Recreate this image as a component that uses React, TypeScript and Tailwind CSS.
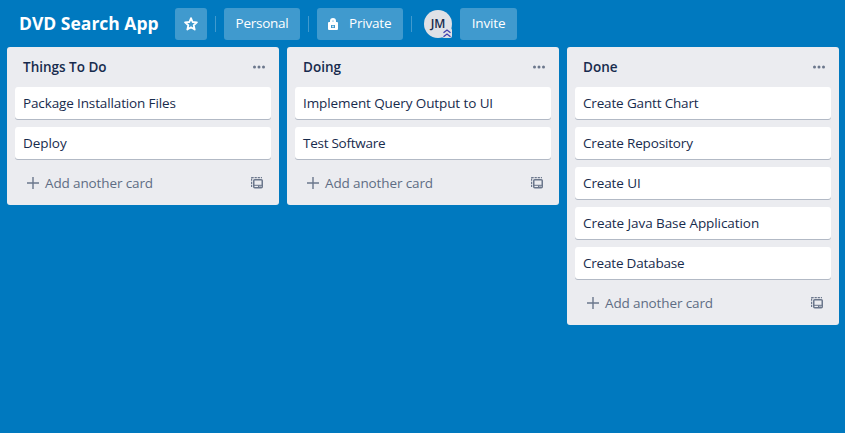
import React from "react";

const lists = [
  { title: "Things To Do", cards: [["Package Installation Files", "tracking-[-0.13px]"], ["Deploy", "tracking-[-0.05px]"]] },
  { title: "Doing", cards: [["Implement Query Output to UI", "tracking-[-0.1px]"], ["Test Software", "tracking-[-0.26px]"]] },
  {
    title: "Done",
    cards: [
      ["Create Gantt Chart", "tracking-[-0.16px]"],
      ["Create Repository", "tracking-[-0.15px]"],
      ["Create UI", "tracking-[-0.12px]"],
      ["Create Java Base Application", "tracking-[-0.07px]"],
      ["Create Database", "tracking-[-0.2px]"],
    ],
  },
];

function Star() {
  return (
    <svg width="14" height="14" viewBox="0 0 14 14" fill="none" stroke="#fff" strokeWidth="1.8" strokeLinejoin="round">
      <path d="M7 1.2 8.6 5 12.9 5.4 9.7 8.2 10.7 12.6 7 10.3 3.3 12.6 4.3 8.2 1.1 5.4 5.4 5Z" />
    </svg>
  );
}

function Lock() {
  return (
    <svg width="10" height="12" viewBox="0 0 10 12" fill="none">
      <path d="M2 5V3q0-3 3-3t3 3v2Z" fill="#fff" />
      <path d="M4 4V2.8q0-.8 1-.8t1 .8V4Z" fill="#c4e0f1" />
      <path fillRule="evenodd" clipRule="evenodd" fill="#fff" d="M1 4h8a1 1 0 0 1 1 1v6a1 1 0 0 1-1 1H1a1 1 0 0 1-1-1V5a1 1 0 0 1 1-1Zm2 3v3h4V7Z" />
      <path fill="#fff" d="M4.3 7.8h1.4v1.4H4.3z" />
    </svg>
  );
}

function Divider() {
  return <span className="h-4 w-px shrink-0 bg-[#409ace]" />;
}

function Dots() {
  return (
    <svg width="14" height="4" viewBox="0 0 14 4" fill="#6b778c">
      <circle cx="2.5" cy="2" r="1.5" />
      <circle cx="7" cy="2" r="1.5" />
      <circle cx="11.5" cy="2" r="1.5" />
    </svg>
  );
}

function Template() {
  return (
    <svg width="12" height="12" viewBox="0 0 12 12" fill="none" stroke="#6b778c">
      <path d="M0.6 10V0.6H11" strokeWidth="1.2" strokeDasharray="2.2 0.9" />
      <rect x="2.75" y="2.75" width="8.5" height="8" rx="1" strokeWidth="1.5" />
      <path d="M3 8.3h8M7.5 8.5v2M9 8.5v2" />
    </svg>
  );
}

function List({ title, cards }: { title: string; cards: string[][] }) {
  return (
    <section className="w-[272px] shrink-0 rounded-[3px] bg-[#ebecf0] px-2 text-[#172b4d]">
      <header className="flex h-10 items-center justify-between pr-[5px] pl-2">
        <h2 className="text-[13.5px] leading-5 font-[550]">{title}</h2>
        <Dots />
      </header>
      <div className="flex flex-col gap-2">
        {cards.map(([card, tracking]) => (
          <div key={card} className={`flex h-8 items-center rounded-[3px] bg-white px-2 text-[13.5px] whitespace-nowrap shadow-[0_1px_0_#091e4240] ${tracking}`}>
            {card}
          </div>
        ))}
      </div>
      <footer className="flex h-[46px] items-start justify-between pt-[14px] pr-2 pl-3 text-[#5e6c84]">
        <div className="flex items-center gap-[6px] text-[13.5px] leading-5 tracking-[-0.12px]">
          <svg width="12" height="12" viewBox="0 0 12 12" stroke="#6b778c" strokeWidth="1.4">
            <path d="M6 0v12M0 6h12" />
          </svg>
          <span>Add another card</span>
        </div>
        <span className="pt-1"><Template /></span>
      </footer>
    </section>
  );
}

const button = "flex h-8 shrink-0 items-center rounded-[3px] bg-[#409ace]";

export default function App() {
  return (
    <main className="h-[433px] w-[845px] overflow-hidden bg-[#0079bf] font-['Open_Sans','Noto_Sans',sans-serif]">
      <nav className="flex h-[47px] items-center text-[13.5px] text-white">
        <h1 className="ml-[19px] w-[156px] text-[17.5px] font-bold whitespace-nowrap">DVD Search App</h1>
        <div className={`${button} mr-2 w-8 justify-center`}><Star /></div>
        <Divider />
        <div className={`${button} mx-2 w-[76px] justify-center tracking-[-0.25px]`}>Personal</div>
        <Divider />
        <div className={`${button} mx-2 w-[86px] pl-[11px] tracking-[-0.2px]`}><Lock /><span className="ml-[11px]">Private</span></div>
        <Divider />
        <div className="relative mr-2 ml-[12px] flex size-7 items-center justify-center rounded-full bg-[#dfe1e6] text-xs font-semibold text-[#172b4d]">
          JM
          <svg className="absolute right-0 bottom-0" width="10" height="10" viewBox="0 0 10 10" fill="none" stroke="#403fae" strokeWidth="1.3">
            <rect width="10" height="10" rx="2" fill="#dfe1e6" stroke="none" />
            <path d="m1.5 4.7 3.5-2.7 3.5 2.7M1.5 8.7 5 6l3.5 2.7" />
          </svg>
        </div>
        <div className={`${button} w-[57px] justify-center tracking-[-0.15px]`}>Invite</div>
      </nav>
      <div className="flex items-start gap-2 pl-[7px]">
        {lists.map((list) => <List key={list.title} {...list} />)}
      </div>
    </main>
  );
}
